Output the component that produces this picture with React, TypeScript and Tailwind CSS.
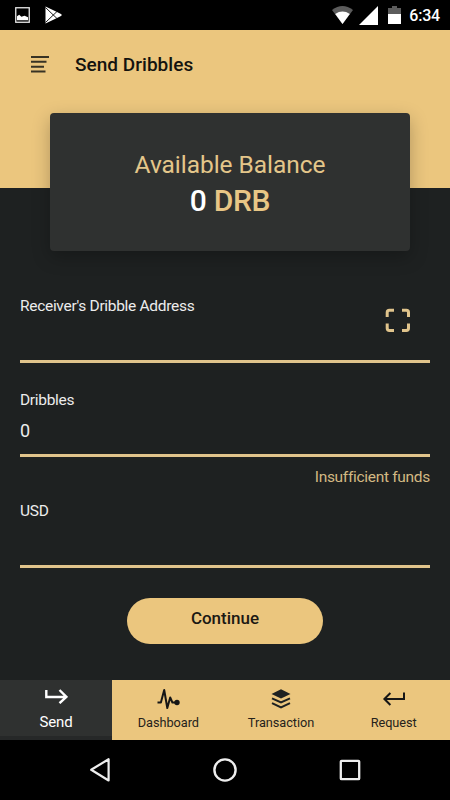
import { ReactNode } from "react";

interface FieldProps {
  label: string;
  value?: string;
  action?: ReactNode;
}

interface TabProps {
  label: string;
  active?: boolean;
  children: ReactNode;
}

const StatusBar = () => {
  return (
    <div className="flex h-[30px] shrink-0 items-center justify-between bg-black pl-[15px] pr-[10px]">
      <div className="flex items-center gap-[15px]">
        <svg width="15" height="16" viewBox="0 0 15 16">
          <rect x="0.75" y="0.75" width="13.5" height="14.5" fill="none" stroke="#e8e8e8" strokeWidth="1.3" />
          <path d="M2 13.3V9.3L4.2 7.8l2.2 1.9 3.2-.9 3.4 1.4v3.1z" fill="#fff" />
        </svg>
        <svg width="17" height="18" viewBox="0 0 17 18">
          <path d="M0.5 0.5L11 5.6L16.5 8.2V9.8L11 12.4L0.5 17.5z" fill="#fff" />
          <path d="M0.5 1.5L12.5 13M0.5 16.5L12.5 5" stroke="#000" strokeWidth="0.9" />
        </svg>
      </div>
      <div className="flex items-center">
        <svg width="21" height="18" viewBox="0 0 21 18">
          <path d="M0 4Q10.5 -4 21 4L10.5 18z" fill="#5c5c5c" />
          <path d="M3.2 8Q10.5 3.2 17.8 8L10.5 18z" fill="#fff" />
        </svg>
        <svg className="ml-[6px]" width="19" height="19" viewBox="0 0 19 19">
          <path d="M19 0V19H0z" fill="#fff" />
        </svg>
        <svg className="ml-[10px]" width="13" height="18" viewBox="0 0 13 18">
          <path d="M4 0h5v2h4v6H0V2h4z" fill="#5c5c5c" />
          <path d="M0 8h13v10H0z" fill="#fff" />
        </svg>
        <span className="ml-[8px] mt-px text-[16px] font-medium leading-none tracking-[-0.2px] text-white">6:34</span>
      </div>
    </div>
  );
};

const Field = ({ label, value, action }: FieldProps) => {
  return (
    <div className="flex h-[67px] justify-between border-b-[3px] border-[#e0c48c]">
      <div className="flex flex-col">
        <label className="text-[15.5px] leading-5 tracking-[-0.3px] text-[#ececec]">{label}</label>
        <span className="mt-[10px] text-[18px] leading-[22px] tracking-[-0.3px] text-[#ececec]">{value}</span>
      </div>
      {action}
    </div>
  );
};

const Tab = ({ label, active, children }: TabProps) => {
  return (
    <button
      className={
        active
          ? "flex w-[112px] flex-col items-center border-b-4 border-[#262828] bg-[#2f3130] text-white"
          : "flex flex-1 flex-col items-center bg-[#ebc67e] text-[#25221b]"
      }
    >
      <span className="flex h-[33px] items-end justify-center">{children}</span>
      <span
        className={
          active
            ? "text-[15px] leading-[19px] tracking-[-0.15px]"
            : "text-[12.75px] leading-5 tracking-[-0.05px]"
        }
      >
        {label}
      </span>
    </button>
  );
};

const App = () => {
  return (
    <div className="flex h-[800px] w-[450px] flex-col overflow-hidden bg-[#1e2121] font-[Roboto,sans-serif]">
      <StatusBar />

      <header className="flex h-[158px] shrink-0 items-start bg-[#ebc67e] pl-[31px] pt-[22px]">
        <svg className="mt-[4px]" width="18" height="17" viewBox="0 0 18 17">
          <path d="M0 1h18M0 5.8h15.5M0 10.8h13M0 15.6h14.5" stroke="#383324" strokeWidth="2" />
        </svg>
        <h1 className="ml-[26px] mt-px text-[19px] font-medium leading-6 tracking-[0.03px] text-[#14130f]">
          Send Dribbles
        </h1>
      </header>

      <section className="relative -mt-[75px] ml-[50px] flex h-[138px] w-[360px] shrink-0 flex-col items-center rounded-[4px] bg-[#2f3130] pt-[36px] shadow-[0_6px_18px_rgba(0,0,0,0.25)]">
        <h2 className="text-[24.5px] leading-8 tracking-[-0.05px] text-[#e4c68a]">Available Balance</h2>
        <p className="text-[30px] font-medium leading-10 tracking-[-0.3px] text-[#e8c685]">
          <span className="text-white">0</span> DRB
        </p>
      </section>

      <main className="flex flex-1 flex-col px-5 pt-[45px]">
        <Field
          label="Receiver's Dribble Address"
          action={
            <svg className="mr-[19px] mt-[12px]" width="26" height="25" viewBox="0 0 26 25">
              <path
                d="M2.2 9V4.4Q2.2 2.2 4.4 2.2H9M17 2.2h4.3Q23.5 2.2 23.5 4.4V9M23.5 15.5v4.8Q23.5 22.5 21.3 22.5H17M9 22.5H4.4Q2.2 22.5 2.2 20.3V15.5"
                fill="none"
                stroke="#e0c48c"
                strokeWidth="3"
              />
            </svg>
          }
        />
        <div className="mt-[26.5px]">
          <Field label="Dribbles" value="0" />
        </div>
        <p className="mt-[10.5px] text-right text-[15.5px] leading-5 tracking-[-0.3px] text-[#d3b983]">
          Insufficient funds
        </p>
        <div className="mt-[14px]">
          <Field label="USD" />
        </div>
        <button className="mx-auto mt-[29.5px] h-[46px] w-[196px] rounded-full bg-[#ebc67e] pb-[3px] text-[17px] font-medium text-[#1b1914]">
          Continue
        </button>
      </main>

      <nav className="flex h-[60px] shrink-0">
        <Tab label="Send" active>
          <svg className="mb-[9px]" width="24" height="15" viewBox="0 0 24 15">
            <path d="M2.3 1v7H22M15.5 1l6.9 6.8-6.9 6.4" fill="none" stroke="#fff" strokeWidth="2.4" />
          </svg>
        </Tab>
        <Tab label="Dashboard">
          <svg className="mb-[3px]" width="24" height="22" viewBox="0 0 24 22">
            <path
              d="M1.5 14.5h3.4L8.2 2l3.1 18 2.9-10.5 2.2 5H20"
              fill="none"
              stroke="#161616"
              strokeWidth="2"
              strokeLinejoin="round"
            />
            <circle cx="21" cy="14.5" r="2.7" fill="#161616" />
          </svg>
        </Tab>
        <Tab label="Transaction">
          <svg className="mb-[4px]" width="20" height="20" viewBox="0 0 20 20">
            <path d="M10 0.3L19.5 5L10 9.5L0.5 5z" fill="#1e2121" />
            <path d="M1 9.3l9 4.2 9-4.2M1 14.2l9 4.2 9-4.2" fill="none" stroke="#1e2121" strokeWidth="2" />
          </svg>
        </Tab>
        <Tab label="Request">
          <svg className="mb-[7px]" width="24" height="14" viewBox="0 0 24 14">
            <path d="M22 0.5V7H2.5M8.4 1L2.4 7l6 6" fill="none" stroke="#161616" strokeWidth="2" />
          </svg>
        </Tab>
      </nav>

      <div className="flex h-[60px] shrink-0 items-center bg-black pl-[89px]">
        <svg width="22" height="26" viewBox="0 0 22 26">
          <path d="M19.6 2.2V23.5L2.2 12.8z" fill="none" stroke="#eee" strokeWidth="2.2" strokeLinejoin="round" />
        </svg>
        <svg className="ml-[101px]" width="26" height="26" viewBox="0 0 26 26">
          <circle cx="13" cy="13" r="10.6" fill="none" stroke="#eee" strokeWidth="2.4" />
        </svg>
        <svg className="ml-[101px]" width="22" height="22" viewBox="0 0 22 22">
          <rect x="1.8" y="1.8" width="18.4" height="18.4" rx="0.8" fill="none" stroke="#eee" strokeWidth="2.3" />
        </svg>
      </div>
    </div>
  );
};

export default App;
